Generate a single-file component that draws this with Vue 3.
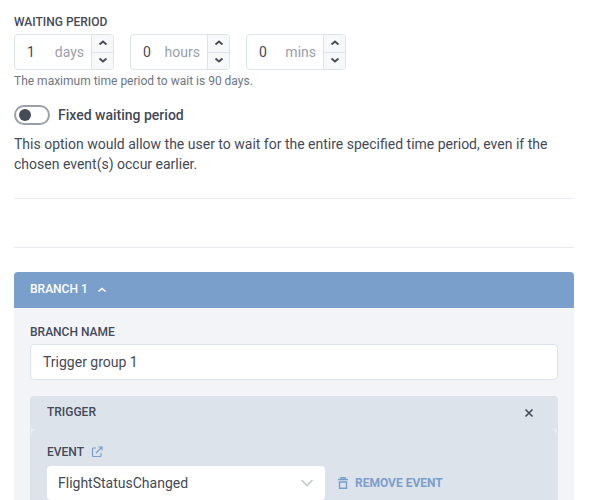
<script setup>
const fields = [
  { value: '1', unit: 'days' },
  { value: '0', unit: 'hours' },
  { value: '0', unit: 'mins' }
]
</script>

<template>
  <div class="page">
    <div class="label first">WAITING PERIOD</div>
    <div class="spinners">
      <div v-for="f in fields" :key="f.unit" class="spinner">
        <div class="val">{{ f.value }}</div>
        <div class="unit">{{ f.unit }}</div>
        <div class="arrows">
          <div class="arrow">
            <svg width="10" height="6" viewBox="0 0 10 6"><path d="M1.5 4.500 5 1.500l3.500 3" fill="none" stroke="#444a56" stroke-width="1.800" /></svg>
          </div>
          <div class="arrow lower">
            <svg width="10" height="6" viewBox="0 0 10 6"><path d="M1.500 1.500 5 4.500l3.500-3" fill="none" stroke="#444a56" stroke-width="1.800" /></svg>
          </div>
        </div>
      </div>
    </div>
    <div class="help">The maximum time period to wait is 90 days.</div>
    <div class="toggle-row">
      <div class="toggle"><span class="knob"></span></div>
      <span class="toggle-label">Fixed waiting period</span>
    </div>
    <p class="desc">This option would allow the user to wait for the entire specified time period, even if the chosen event(s) occur earlier.</p>
    <hr class="rule one" />
    <hr class="rule two" />
    <section class="branch">
      <header class="branch-head">
        <span>BRANCH 1</span>
        <svg class="head-chevron" width="10" height="6" viewBox="0 0 10 6"><path d="M1.500 4.500 5 1.500l3.500 3" fill="none" stroke="#fff" stroke-width="1.600" /></svg>
      </header>
      <div class="branch-body">
        <div class="label">BRANCH NAME</div>
        <div class="text-input">Trigger group 1</div>
        <div class="trigger">
          <div class="trigger-head">
            <span>TRIGGER</span>
            <svg class="close" width="10" height="10" viewBox="0 0 10 10"><path d="M1.500 1.500l7 7m0-7-7 7" fill="none" stroke="#444a56" stroke-width="1.600" /></svg>
          </div>
          <div class="trigger-body">
            <div class="label event-label">
              EVENT
              <svg width="12" height="12" viewBox="0 0 12 12" fill="none" stroke="#7a9fca" stroke-width="1.200"><path d="M5 2H2.500A1 1 0 0 0 1.500 3v6.500a1 1 0 0 0 1 1H9a1 1 0 0 0 1-1V7" /><path d="M5 7l5.500-5.500M7.500 1h3.500v3.500" /></svg>
            </div>
            <div class="event-row">
              <div class="select">
                <span>FlightStatusChanged</span>
                <svg width="14" height="8" viewBox="0 0 14 8"><path d="M1.500 1 7 6.500 12.500 1" fill="none" stroke="#c4c8ce" stroke-width="1.600" /></svg>
              </div>
              <div class="remove">
                <svg width="10" height="12" viewBox="0 0 10 12" fill="none" stroke="#7a9fca" stroke-width="1.400"><path d="M0 2.500h10M3 2.500V.7h4v1.800M1.500 5h7v6.300h-7z" /></svg>
                <span>REMOVE EVENT</span>
              </div>
            </div>
          </div>
        </div>
      </div>
    </section>
  </div>
</template>

<style>
html, body { margin: 0; height: 500px; overflow: hidden; background: #fff; }
</style>

<style scoped>
.page {
  box-sizing: border-box;
  width: 600px;
  height: 500px;
  overflow: hidden;
  padding: 15px 26px 0 14px;
  font-family: Roboto, sans-serif;
  color: #444a56;
  font-size: 14px;
}
.label {
  font-size: 12px;
  font-weight: 500;
  line-height: 14px;
  color: #444a56;
}
.first { margin-bottom: 5px; }
.spinners { display: flex; gap: 16px; }
.spinner {
  box-sizing: border-box;
  width: 100px;
  height: 36px;
  display: flex;
  border: 1px solid #dde3eb;
  border-radius: 4px;
  background: #fff;
  line-height: 34px;
}
.val { width: 32px; text-align: center; color: #444a56; flex: none; }
.unit { flex: 1; text-align: right; padding-right: 7px; color: #9aa0aa; }
.arrows {
  width: 21px;
  flex: none;
  border-left: 1px solid #dde3eb;
  background: #f7f8fa;
  border-radius: 0 3px 3px 0;
  display: flex;
  flex-direction: column;
}
.arrow { flex: 1; display: flex; align-items: center; justify-content: center; }
.lower { border-top: 1px solid #dde3eb; }
.lower svg { margin-bottom: 2px; }
.help {
  font-size: 12px;
  line-height: 14px;
  color: #6f7580;
  margin-top: 4px;
}
.toggle-row { display: flex; align-items: center; gap: 8px; margin-top: 17px; }
.toggle {
  box-sizing: border-box;
  width: 36px;
  height: 20px;
  border: 2px solid #9aa0aa;
  border-radius: 10px;
  display: flex;
  align-items: center;
  padding-left: 3px;
}
.knob { width: 12px; height: 12px; border-radius: 50%; background: #444a56; }
.toggle-label { font-weight: 500; line-height: 20px; }
.desc { margin: 9px 0 0; line-height: 20px; width: 560px; }
.rule { border: 0; border-top: 1px solid #e8ebef; margin: 0; width: 560px; }
.one { margin-top: 24px; }
.two { margin-top: 48px; }
.branch { width: 560px; margin-top: 24px; }
.branch-head {
  height: 36px;
  box-sizing: border-box;
  background: #7a9fca;
  color: #fff;
  border-radius: 4px 4px 0 0;
  padding: 0 0 2px 16px;
  display: flex;
  align-items: center;
  gap: 9px;
  font-size: 12px;
  font-weight: 500;
}
.head-chevron { margin-top: 2px; }
.branch-body { background: #f2f4f8; padding: 17px 16px 0; height: 200px; }
.text-input {
  box-sizing: border-box;
  height: 36px;
  margin-top: 5px;
  background: #fff;
  border: 1px solid #dde3eb;
  border-radius: 4px;
  padding-left: 12px;
  line-height: 34px;
  color: #444a56;
}
.trigger { margin-top: 16px; border-radius: 4px; background: #dde3eb; }
.trigger-head {
  height: 33px;
  box-sizing: border-box;
  padding: 0 24px 2px 17px;
  display: flex;
  justify-content: space-between;
  align-items: center;
  font-size: 12px;
  font-weight: 500;
}
.close { margin-top: 3px; }
.trigger-body {
  position: relative;
  padding: 16px 17px 0;
  height: 120px;
}
.trigger-body::before,
.trigger-body::after {
  content: "";
  position: absolute;
  top: 0;
  width: 6px;
  height: 6px;
}
.trigger-body::before {
  left: 1px;
  background: linear-gradient(135deg, #f2f4f8 0%, #dde3eb 55%);
}
.trigger-body::after {
  right: 1px;
  background: linear-gradient(225deg, #f2f4f8 0%, #dde3eb 55%);
}
.event-label { display: flex; align-items: center; gap: 7px; }
.event-row { display: flex; align-items: center; margin-top: 7px; gap: 13px; }
.select {
  box-sizing: border-box;
  width: 278px;
  height: 34px;
  background: #fff;
  border-radius: 4px;
  padding: 0 11px;
  display: flex;
  align-items: center;
  justify-content: space-between;
}
.remove {
  display: flex;
  align-items: center;
  gap: 7px;
  color: #7a9fca;
  font-size: 12px;
  font-weight: 700;
}
</style>
